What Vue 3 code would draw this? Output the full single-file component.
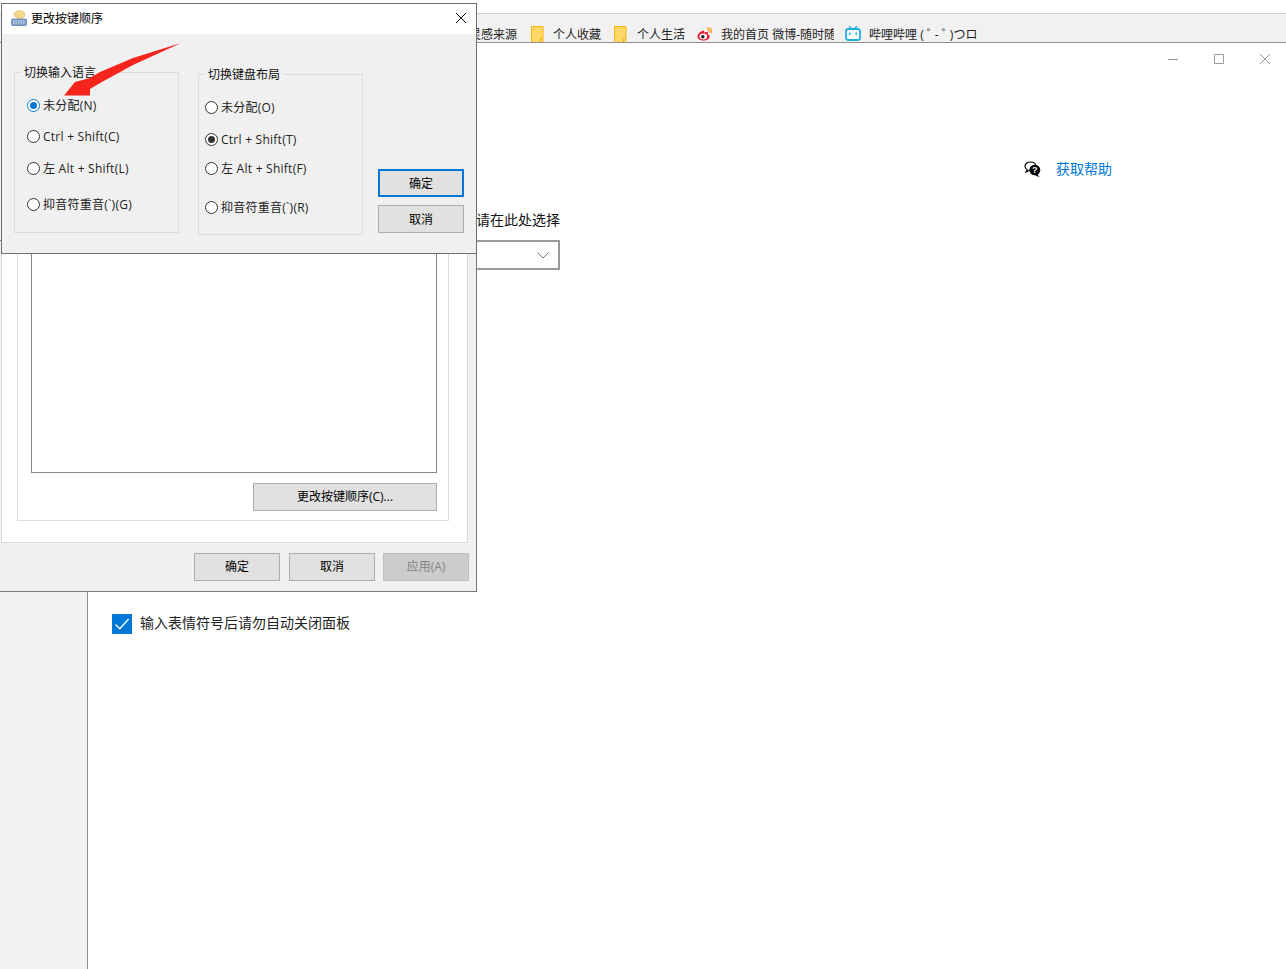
<script setup>
const langOptions = [
  { label: '未分配(N)', gap: 24, state: 'blue' },
  { label: 'Ctrl + Shift(C)', gap: 15 },
  { label: '左 Alt + Shift(L)', gap: 16 },
  { label: '抑音符重音(`)(G)', gap: 20 },
]
const layoutOptions = [
  { label: '未分配(O)', gap: 24 },
  { label: 'Ctrl + Shift(T)', gap: 16, state: 'dark' },
  { label: '左 Alt + Shift(F)', gap: 13 },
  { label: '抑音符重音(`)(R)', gap: 23 },
]
</script>

<template>
  <div class="desktop">
    <div class="browser-top">
      <div class="bookmarks">
        <span class="bm-text first">灵感来源</span>
        <svg class="folder" width="13" height="17" viewBox="0 0 13 17"><path d="M.5.5h11.5v16H.5z" fill="#ffd766" stroke="#f6b60c"/><path d="M9.5 16.5v-4h2.5" fill="none" stroke="#f6b60c"/></svg>
        <span class="bm-text t1">个人收藏</span>
        <svg class="folder f2" width="13" height="17" viewBox="0 0 13 17"><path d="M.5.5h11.5v16H.5z" fill="#ffd766" stroke="#f6b60c"/><path d="M9.5 16.5v-4h2.5" fill="none" stroke="#f6b60c"/></svg>
        <span class="bm-text t2">个人生活</span>
        <svg class="weibo" width="16" height="14" viewBox="0 0 16 14">
          <path d="M6.5 3.6C3.4 4.6.4 7.4.5 9.7c.1 2.4 3 3.8 6 3.8 3.500 0 6.200-2 6.200-4 0-1.300-1.100-1.800-2-2 .5-1.200.3-2.200-.6-2.500-1-.3-2.200.2-3 .8.200-1 .2-2.600-.6-2.200z" fill="#e6162d"/>
          <ellipse cx="6.300" cy="9.500" rx="3.800" ry="3" fill="#fff"/>
          <circle cx="5.800" cy="9.700" r="1.800" fill="#222"/>
          <path d="M10.500 1.200c2.600-.5 4.800 1.700 4 4.300M10.700 3.300c1.300-.2 2.300.9 1.900 2.100" fill="none" stroke="#f59a1f" stroke-width="1.300" stroke-linecap="round"/>
        </svg>
        <span class="bm-text t3">我的首页 微博-随时随地</span>
        <svg class="bili" width="16" height="15" viewBox="0 0 16 15">
          <path d="M4.500.6l2 2.200M11.500.6l-2 2.200" stroke="#23ade5" stroke-width="1.400" stroke-linecap="round"/>
          <rect x="1" y="3" width="14" height="11" rx="2.200" fill="#fff" stroke="#23ade5" stroke-width="1.800"/>
          <path d="M4.800 7v1.500M11.200 7v1.500" stroke="#23ade5" stroke-width="1.500" stroke-linecap="round"/>
        </svg>
        <span class="bm-text t4">哔哩哔哩 ( <span class="kana">゜</span>- <span class="kana">゜</span>)つロ</span>
      </div>
    </div>

    <div class="main">
      <aside class="sidebar"></aside>
      <section class="content">
        <div class="win-controls">
          <svg width="10" height="10" viewBox="0 0 10 10"><path d="M0 5.500h10" stroke="#999"/></svg>
          <svg width="10" height="10" viewBox="0 0 10 10"><path d="M.5.500h9v9h-9z" fill="none" stroke="#999"/></svg>
          <svg width="10" height="10" viewBox="0 0 10 10"><path d="M0 0l10 10M10 0L0 10" stroke="#999"/></svg>
        </div>
        <div class="help-row">
          <svg width="17" height="17" viewBox="0 0 17 17">
            <path d="M6.500 1C3.400 1 1 2.800 1 5.200c0 1.500.9 2.700 2.200 3.500L2 11l3.400-1.800" fill="#fff" stroke="#000" stroke-width="1.200"/>
            <path d="M6.500 1C9 1 11 2.100 11.700 3.800" fill="none" stroke="#000" stroke-width="1.200"/>
            <ellipse cx="10.800" cy="9" rx="5.500" ry="5.300" fill="#000"/>
            <path d="M13 13l2.800 3.300-4.800-2z" fill="#000"/>
            <text x="10.800" y="12.300" text-anchor="middle" class="q">?</text>
          </svg>
          <a class="help-link">获取帮助</a>
        </div>
        <p class="override">如果你想使用的输入法与语言列表中的第一个输入法不同，请在此处选择</p>
        <div class="select">
          <svg width="12" height="7" viewBox="0 0 12 7"><path d="M.5.500L6 6 11.500.500" fill="none" stroke="#777"/></svg>
        </div>
        <label class="check-row">
          <span class="checkbox">
            <svg width="20" height="20" viewBox="0 0 20 20"><path d="M3.500 10.500l4.300 4.300 8.800-9.800" fill="none" stroke="#fff" stroke-width="1.300"/></svg>
          </span>
          <span class="check-label">输入表情符号后请勿自动关闭面板</span>
        </label>
      </section>
    </div>

    <div class="rear-dialog">
      <div class="tab-panel">
        <div class="hotkey-group">
          <div class="hotkey-list"></div>
          <button class="btn wide">更改按键顺序(C)...</button>
        </div>
      </div>
      <div class="rear-footer">
        <button class="btn">确定</button>
        <button class="btn cancel">取消</button>
        <button class="btn disabled">应用(A)</button>
      </div>
    </div>

    <div class="front-dialog">
      <div class="title-bar">
        <svg class="title-icon" width="16" height="16" viewBox="0 0 16 16">
          <ellipse cx="8.500" cy="4.500" rx="5.500" ry="3.800" fill="#f5d98a" stroke="#cdb46e" stroke-width=".6"/>
          <path d="M7 7.500L6 10h4L9.500 7.500z" fill="#f1d27a"/>
          <rect x=".5" y="9" width="15" height="6.500" rx="1" fill="#7f9fc6" stroke="#5b7ca8" stroke-width=".7"/>
          <path d="M2 11h12M2 13h12" stroke="#dce8f5" stroke-dasharray="1.500 1"/>
        </svg>
        <span class="title-text">更改按键顺序</span>
        <svg class="title-close" width="10" height="10" viewBox="0 0 10 10"><path d="M0 0l10 10M10 0L0 10" stroke="#000"/></svg>
      </div>
      <div class="dialog-body">
        <div class="group lang">
          <span class="legend">切换输入语言</span>
          <div v-for="o in langOptions" :key="o.label" class="radio-row" :style="{ marginTop: o.gap + 'px' }">
            <span class="radio" :class="o.state"></span>
            <span class="radio-label">{{ o.label }}</span>
          </div>
        </div>
        <div class="group layout">
          <span class="legend">切换键盘布局</span>
          <div v-for="o in layoutOptions" :key="o.label" class="radio-row" :style="{ marginTop: o.gap + 'px' }">
            <span class="radio" :class="o.state"></span>
            <span class="radio-label">{{ o.label }}</span>
          </div>
        </div>
        <div class="dialog-actions">
          <button class="btn primary">确定</button>
          <button class="btn">取消</button>
        </div>
      </div>
    </div>

    <svg class="arrow" width="190" height="60" viewBox="0 0 190 60">
      <polygon points="181,3 133,18 100,32 90,38 75,42 64,55.500 90,55.500 90,49 100,43 133,25" fill="#f5251c"/>
    </svg>
  </div>
</template>

<style>
html, body { margin: 0; background: #fff; }
</style>

<style scoped>
.desktop {
  position: relative;
  width: 1286px;
  height: 969px;
  overflow: hidden;
  background: #fff;
  display: flex;
  flex-direction: column;
  font-family: "Open Sans", "Noto Sans CJK SC", sans-serif;
  font-size: 12px;
  color: #000;
}
.browser-top {
  height: 43px;
  box-sizing: border-box;
  padding-top: 13px;
  flex: none;
}
.bookmarks {
  height: 30px;
  box-sizing: border-box;
  background: #f1f1f1;
  border-top: 1px solid #cfcfcf;
  border-bottom: 1px solid #8f8f8f;
  display: flex;
  align-items: flex-start;
  padding-left: 469px;
  overflow: hidden;
  color: #222;
}
.bm-text { line-height: 16px; margin-top: 13px; white-space: nowrap; }
.folder { margin: 12px 0 0 14px; flex: none; }
.f2 { margin-left: 13px; }
.t1 { margin-left: 9px; }
.t2 { margin-left: 10px; }
.weibo { margin: 13px 0 0 12px; flex: none; }
.t3 { margin-left: 8px; width: 113px; overflow: hidden; }
.bili { margin: 12px 0 0 11px; flex: none; }
.t4 { margin-left: 8px; }
.kana { letter-spacing: -4px; }
.main { flex: 1; display: flex; min-height: 0; }
.sidebar {
  width: 88px;
  box-sizing: border-box;
  background: #f2f2f2;
  border-right: 1px solid #8f8f8f;
  flex: none;
}
.content { flex: 1; display: flex; flex-direction: column; padding-left: 24px; position: relative; }
.win-controls {
  display: flex;
  justify-content: flex-end;
  gap: 36px;
  padding: 11px 16px 0 0;
  height: 10px;
}
.help-row {
  display: flex;
  align-items: center;
  gap: 15px;
  margin: 95px 0 0 912px;
  height: 20px;
}
.q { font: bold 9px "Liberation Sans", sans-serif; fill: #fff; }
.help-link { font-size: 14px; color: #0078d7; line-height: 20px; }
.override {
  margin: 31px 0 0;
  width: 448px;
  height: 20px;
  font-size: 14px;
  line-height: 20px;
  white-space: nowrap;
  direction: rtl;
  overflow: hidden;
  color: #111;
}
.select {
  margin-top: 10px;
  width: 448px;
  height: 30px;
  box-sizing: border-box;
  border: 2px solid #999;
  display: flex;
  align-items: center;
  justify-content: flex-end;
  padding-right: 9px;
}
.check-row {
  margin-top: 343px;
  display: flex;
  align-items: center;
  gap: 8px;
  font-size: 14px;
  line-height: 20px;
  color: #222;
}
.check-label { padding-bottom: 2px; }
.checkbox { width: 20px; height: 20px; background: #0078d7; display: block; }
.checkbox svg { display: block; }

.rear-dialog {
  position: absolute;
  left: -1px;
  top: 240px;
  width: 478px;
  height: 352px;
  box-sizing: border-box;
  background: #f0f0f0;
  border: 1px solid #777;
  display: flex;
  flex-direction: column;
}
.tab-panel {
  flex: 1;
  margin: 0 8px 0 1px;
  box-sizing: border-box;
  background: #fff;
  border: 1px solid #d9d9d9;
  padding: 0 18px 21px 15px;
  display: flex;
}
.hotkey-group {
  flex: 1;
  box-sizing: border-box;
  border: 1px solid #dcdcdc;
  padding: 0 11px 9px 13px;
  display: flex;
  flex-direction: column;
  align-items: flex-end;
}
.hotkey-list {
  flex: 1;
  align-self: stretch;
  border: 1px solid #828790;
  margin-bottom: 10px;
}
.rear-footer {
  height: 48px;
  flex: none;
  display: flex;
  justify-content: flex-end;
  align-items: flex-start;
  padding: 10px 7px 0 0;
  box-sizing: border-box;
}
.cancel { margin: 0 8px 0 9px; }
.btn {
  width: 86px;
  height: 28px;
  box-sizing: border-box;
  background: #e1e1e1;
  border: 1px solid #adadad;
  font: inherit;
  color: #000;
  padding: 0;
  flex: none;
}
.rear-dialog .btn { padding-bottom: 2px; }
.btn.wide { width: 184px; }
.btn.disabled { background: #cccccc; border-color: #bfbfbf; color: #838383; }
.btn.primary { border: 2px solid #0078d7; }

.front-dialog {
  position: absolute;
  left: 1px;
  top: 3px;
  width: 476px;
  height: 251px;
  box-sizing: border-box;
  border: 1px solid #6e6e6e;
  background: #f0f0f0;
  display: flex;
  flex-direction: column;
}
.title-bar {
  height: 30px;
  flex: none;
  background: #fff;
  display: flex;
  align-items: center;
  padding: 0 10px 2px 9px;
  box-sizing: border-box;
}
.title-text { margin: 2px 0 0 4px; flex: 1; line-height: 16px; }
.dialog-body {
  flex: 1;
  display: flex;
  align-items: flex-start;
  padding-left: 12px;
}
.group {
  position: relative;
  width: 165px;
  height: 161px;
  box-sizing: border-box;
  border: 1px solid #dcdcdc;
  padding-left: 12px;
  display: flex;
  flex-direction: column;
}
.lang { margin-top: 38px; }
.layout { margin: 40px 0 0 19px; padding-left: 6px; }
.legend {
  position: absolute;
  left: 6px;
  top: -8px;
  padding: 0 3px;
  background: #f0f0f0;
  line-height: 16px;
  color: #111;
}
.radio-row {
  display: flex;
  align-items: center;
  gap: 3px;
  height: 16px;
  line-height: 16px;
  white-space: nowrap;
  color: #222;
}
.radio-label { margin-top: 2px; letter-spacing: .25px; }
.radio {
  width: 13px;
  height: 13px;
  box-sizing: border-box;
  border: 1px solid #333;
  border-radius: 50%;
  background: #fff;
  flex: none;
  position: relative;
}
.radio.blue { border-color: #0078d7; }
.radio.blue::after, .radio.dark::after {
  content: "";
  position: absolute;
  left: 2px;
  top: 2px;
  width: 7px;
  height: 7px;
  border-radius: 50%;
  background: #0078d7;
}
.radio.dark::after { background: #333; }
.dialog-actions {
  margin: 135px 0 0 15px;
  display: flex;
  flex-direction: column;
  gap: 8px;
}
.arrow { position: absolute; left: 0; top: 40px; }
</style>
